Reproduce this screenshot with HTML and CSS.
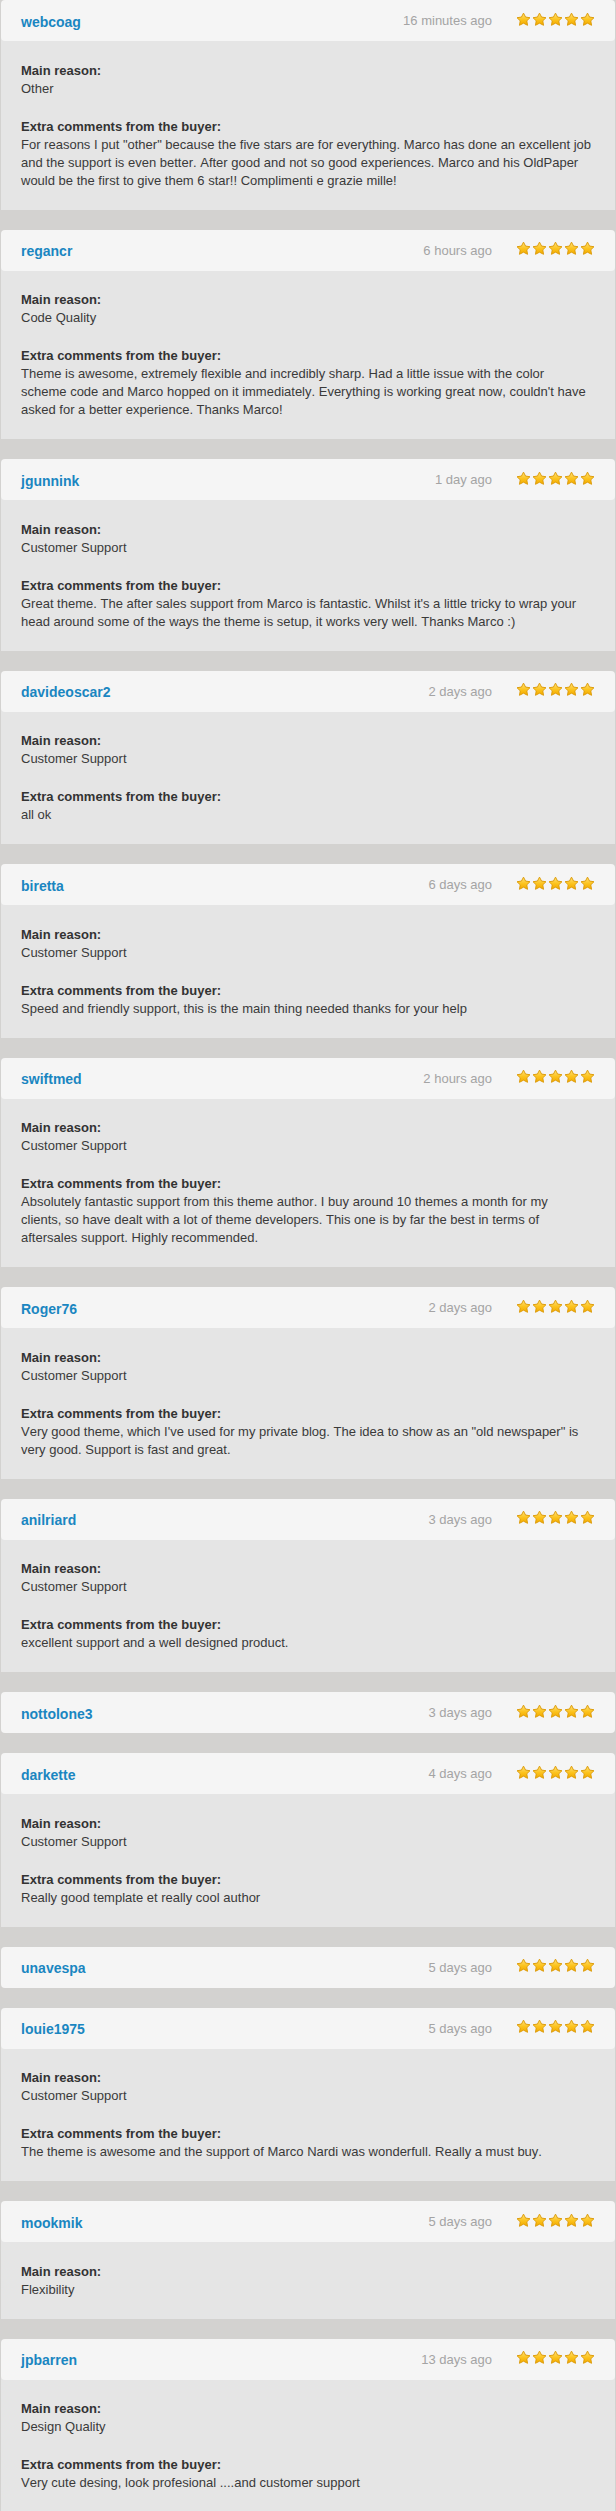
FILE: index.html
```html
<!DOCTYPE html>
<html lang="en">
<head>
<meta charset="utf-8">
<title>Reviews</title>
<link rel="stylesheet" href="styles.css">
</head>
<body>
<svg class="sprite" aria-hidden="true">
  <defs>
    <linearGradient id="sg" x1="0" y1="0" x2="0" y2="1">
      <stop offset="0" stop-color="#ffe27a"/>
      <stop offset="0.55" stop-color="#fcc21b"/>
      <stop offset="1" stop-color="#f2a900"/>
    </linearGradient>
    <symbol id="star" viewBox="0 0 16 16">
      <polygon points="8,1.2 10.2,5.4 14.9,6.1 11.5,9.4 12.3,14.2 8,11.9 3.7,14.2 4.5,9.4 1.1,6.1 5.8,5.4" fill="url(#sg)" stroke="#dc9a06" stroke-width="1" stroke-linejoin="round"/>
    </symbol>
  </defs>
</svg>

<main class="reviews">

  <article class="review">
    <header class="review-head">
      <a class="user">webcoag</a>
      <span class="time">16 minutes ago</span>
      <svg class="stars" viewBox="0 0 79 15"><use href="#star" x="0" width="15" height="15"/><use href="#star" x="16" width="15" height="15"/><use href="#star" x="32" width="15" height="15"/><use href="#star" x="48" width="15" height="15"/><use href="#star" x="64" width="15" height="15"/></svg>
    </header>
    <div class="review-body">
      <h4 class="label">Main reason:</h4>
      <p class="value">Other</p>
      <h4 class="label extra">Extra comments from the buyer:</h4>
      <p class="value">For reasons I put "other" because the five stars are for everything. Marco has done an excellent job and the support is even better. After good and not so good experiences. Marco and his OldPaper would be the first to give them 6 star!! Complimenti e grazie mille!</p>
    </div>
  </article>

  <article class="review">
    <header class="review-head">
      <a class="user">regancr</a>
      <span class="time">6 hours ago</span>
      <svg class="stars" viewBox="0 0 79 15"><use href="#star" x="0" width="15" height="15"/><use href="#star" x="16" width="15" height="15"/><use href="#star" x="32" width="15" height="15"/><use href="#star" x="48" width="15" height="15"/><use href="#star" x="64" width="15" height="15"/></svg>
    </header>
    <div class="review-body">
      <h4 class="label">Main reason:</h4>
      <p class="value">Code Quality</p>
      <h4 class="label extra">Extra comments from the buyer:</h4>
      <p class="value">Theme is awesome, extremely flexible and incredibly sharp. Had a little issue with the color scheme code and Marco hopped on it immediately. Everything is working great now, couldn't have asked for a better experience. Thanks Marco!</p>
    </div>
  </article>

  <article class="review">
    <header class="review-head">
      <a class="user">jgunnink</a>
      <span class="time">1 day ago</span>
      <svg class="stars" viewBox="0 0 79 15"><use href="#star" x="0" width="15" height="15"/><use href="#star" x="16" width="15" height="15"/><use href="#star" x="32" width="15" height="15"/><use href="#star" x="48" width="15" height="15"/><use href="#star" x="64" width="15" height="15"/></svg>
    </header>
    <div class="review-body">
      <h4 class="label">Main reason:</h4>
      <p class="value">Customer Support</p>
      <h4 class="label extra">Extra comments from the buyer:</h4>
      <p class="value">Great theme. The after sales support from Marco is fantastic. Whilst it's a little tricky to wrap your head around some of the ways the theme is setup, it works very well. Thanks Marco :)</p>
    </div>
  </article>

  <article class="review">
    <header class="review-head">
      <a class="user">davideoscar2</a>
      <span class="time">2 days ago</span>
      <svg class="stars" viewBox="0 0 79 15"><use href="#star" x="0" width="15" height="15"/><use href="#star" x="16" width="15" height="15"/><use href="#star" x="32" width="15" height="15"/><use href="#star" x="48" width="15" height="15"/><use href="#star" x="64" width="15" height="15"/></svg>
    </header>
    <div class="review-body">
      <h4 class="label">Main reason:</h4>
      <p class="value">Customer Support</p>
      <h4 class="label extra">Extra comments from the buyer:</h4>
      <p class="value">all ok</p>
    </div>
  </article>

  <article class="review">
    <header class="review-head">
      <a class="user">biretta</a>
      <span class="time">6 days ago</span>
      <svg class="stars" viewBox="0 0 79 15"><use href="#star" x="0" width="15" height="15"/><use href="#star" x="16" width="15" height="15"/><use href="#star" x="32" width="15" height="15"/><use href="#star" x="48" width="15" height="15"/><use href="#star" x="64" width="15" height="15"/></svg>
    </header>
    <div class="review-body">
      <h4 class="label">Main reason:</h4>
      <p class="value">Customer Support</p>
      <h4 class="label extra">Extra comments from the buyer:</h4>
      <p class="value">Speed and friendly support, this is the main thing needed thanks for your help</p>
    </div>
  </article>

  <article class="review">
    <header class="review-head">
      <a class="user">swiftmed</a>
      <span class="time">2 hours ago</span>
      <svg class="stars" viewBox="0 0 79 15"><use href="#star" x="0" width="15" height="15"/><use href="#star" x="16" width="15" height="15"/><use href="#star" x="32" width="15" height="15"/><use href="#star" x="48" width="15" height="15"/><use href="#star" x="64" width="15" height="15"/></svg>
    </header>
    <div class="review-body">
      <h4 class="label">Main reason:</h4>
      <p class="value">Customer Support</p>
      <h4 class="label extra">Extra comments from the buyer:</h4>
      <p class="value">Absolutely fantastic support from this theme author. I buy around 10 themes a month for my clients, so have dealt with a lot of theme developers. This one is by far the best in terms of aftersales support. Highly recommended.</p>
    </div>
  </article>

  <article class="review">
    <header class="review-head">
      <a class="user">Roger76</a>
      <span class="time">2 days ago</span>
      <svg class="stars" viewBox="0 0 79 15"><use href="#star" x="0" width="15" height="15"/><use href="#star" x="16" width="15" height="15"/><use href="#star" x="32" width="15" height="15"/><use href="#star" x="48" width="15" height="15"/><use href="#star" x="64" width="15" height="15"/></svg>
    </header>
    <div class="review-body">
      <h4 class="label">Main reason:</h4>
      <p class="value">Customer Support</p>
      <h4 class="label extra">Extra comments from the buyer:</h4>
      <p class="value">Very good theme, which I've used for my private blog. The idea to show as an "old newspaper" is very good. Support is fast and great.</p>
    </div>
  </article>

  <article class="review">
    <header class="review-head">
      <a class="user">anilriard</a>
      <span class="time">3 days ago</span>
      <svg class="stars" viewBox="0 0 79 15"><use href="#star" x="0" width="15" height="15"/><use href="#star" x="16" width="15" height="15"/><use href="#star" x="32" width="15" height="15"/><use href="#star" x="48" width="15" height="15"/><use href="#star" x="64" width="15" height="15"/></svg>
    </header>
    <div class="review-body">
      <h4 class="label">Main reason:</h4>
      <p class="value">Customer Support</p>
      <h4 class="label extra">Extra comments from the buyer:</h4>
      <p class="value">excellent support and a well designed product.</p>
    </div>
  </article>

  <article class="review">
    <header class="review-head">
      <a class="user">nottolone3</a>
      <span class="time">3 days ago</span>
      <svg class="stars" viewBox="0 0 79 15"><use href="#star" x="0" width="15" height="15"/><use href="#star" x="16" width="15" height="15"/><use href="#star" x="32" width="15" height="15"/><use href="#star" x="48" width="15" height="15"/><use href="#star" x="64" width="15" height="15"/></svg>
    </header>
  </article>

  <article class="review">
    <header class="review-head">
      <a class="user">darkette</a>
      <span class="time">4 days ago</span>
      <svg class="stars" viewBox="0 0 79 15"><use href="#star" x="0" width="15" height="15"/><use href="#star" x="16" width="15" height="15"/><use href="#star" x="32" width="15" height="15"/><use href="#star" x="48" width="15" height="15"/><use href="#star" x="64" width="15" height="15"/></svg>
    </header>
    <div class="review-body">
      <h4 class="label">Main reason:</h4>
      <p class="value">Customer Support</p>
      <h4 class="label extra">Extra comments from the buyer:</h4>
      <p class="value">Really good template et really cool author</p>
    </div>
  </article>

  <article class="review">
    <header class="review-head">
      <a class="user">unavespa</a>
      <span class="time">5 days ago</span>
      <svg class="stars" viewBox="0 0 79 15"><use href="#star" x="0" width="15" height="15"/><use href="#star" x="16" width="15" height="15"/><use href="#star" x="32" width="15" height="15"/><use href="#star" x="48" width="15" height="15"/><use href="#star" x="64" width="15" height="15"/></svg>
    </header>
  </article>

  <article class="review">
    <header class="review-head">
      <a class="user">louie1975</a>
      <span class="time">5 days ago</span>
      <svg class="stars" viewBox="0 0 79 15"><use href="#star" x="0" width="15" height="15"/><use href="#star" x="16" width="15" height="15"/><use href="#star" x="32" width="15" height="15"/><use href="#star" x="48" width="15" height="15"/><use href="#star" x="64" width="15" height="15"/></svg>
    </header>
    <div class="review-body">
      <h4 class="label">Main reason:</h4>
      <p class="value">Customer Support</p>
      <h4 class="label extra">Extra comments from the buyer:</h4>
      <p class="value">The theme is awesome and the support of Marco Nardi was wonderfull. Really a must buy.</p>
    </div>
  </article>

  <article class="review">
    <header class="review-head">
      <a class="user">mookmik</a>
      <span class="time">5 days ago</span>
      <svg class="stars" viewBox="0 0 79 15"><use href="#star" x="0" width="15" height="15"/><use href="#star" x="16" width="15" height="15"/><use href="#star" x="32" width="15" height="15"/><use href="#star" x="48" width="15" height="15"/><use href="#star" x="64" width="15" height="15"/></svg>
    </header>
    <div class="review-body">
      <h4 class="label">Main reason:</h4>
      <p class="value">Flexibility</p>
    </div>
  </article>

  <article class="review">
    <header class="review-head">
      <a class="user">jpbarren</a>
      <span class="time">13 days ago</span>
      <svg class="stars" viewBox="0 0 79 15"><use href="#star" x="0" width="15" height="15"/><use href="#star" x="16" width="15" height="15"/><use href="#star" x="32" width="15" height="15"/><use href="#star" x="48" width="15" height="15"/><use href="#star" x="64" width="15" height="15"/></svg>
    </header>
    <div class="review-body">
      <h4 class="label">Main reason:</h4>
      <p class="value">Design Quality</p>
      <h4 class="label extra">Extra comments from the buyer:</h4>
      <p class="value">Very cute desing, look profesional ....and customer support</p>
    </div>
  </article>

</main>
</body>
</html>
```

FILE: styles.css
```css
html, body {
  margin: 0;
  padding: 0;
}

body {
  background: #d3d2d0;
  font-family: "Liberation Sans", Arial, Helvetica, sans-serif;
  font-kerning: none;
  color: #3a3a3a;
}

.sprite {
  position: absolute;
  width: 0;
  height: 0;
  overflow: hidden;
}

.reviews {
  display: flex;
  flex-direction: column;
  gap: 20px;
  padding: 0 1px 40px 1px;
}

.review {
  display: flex;
  flex-direction: column;
}

.review-head {
  position: relative;
  z-index: 1;
  display: flex;
  align-items: center;
  height: 41px;
  box-sizing: border-box;
  padding: 0 20px;
  background: #f5f5f5;
  border-radius: 4px;
}

.user {
  flex: 1;
  padding-top: 2px;
  font-size: 14px;
  font-weight: 700;
  color: #1a86c1;
  text-decoration: none;
}

.time {
  margin-right: 24px;
  font-size: 13px;
  color: #a4a4a4;
}

.stars {
  display: block;
  width: 79px;
  height: 15px;
  margin-bottom: 3px;
}

.review-body {
  margin-top: -4px;
  padding: 24.5px 23.5px 20px 20px;
  background: #e5e5e5;
  font-size: 13px;
  line-height: 18px;
}

.label {
  margin: 0;
  font-size: 13px;
  font-weight: 700;
  color: #333333;
}

.label.extra {
  margin-top: 20px;
}

.value {
  margin: 0;
  color: #3a3a3a;
}
```
